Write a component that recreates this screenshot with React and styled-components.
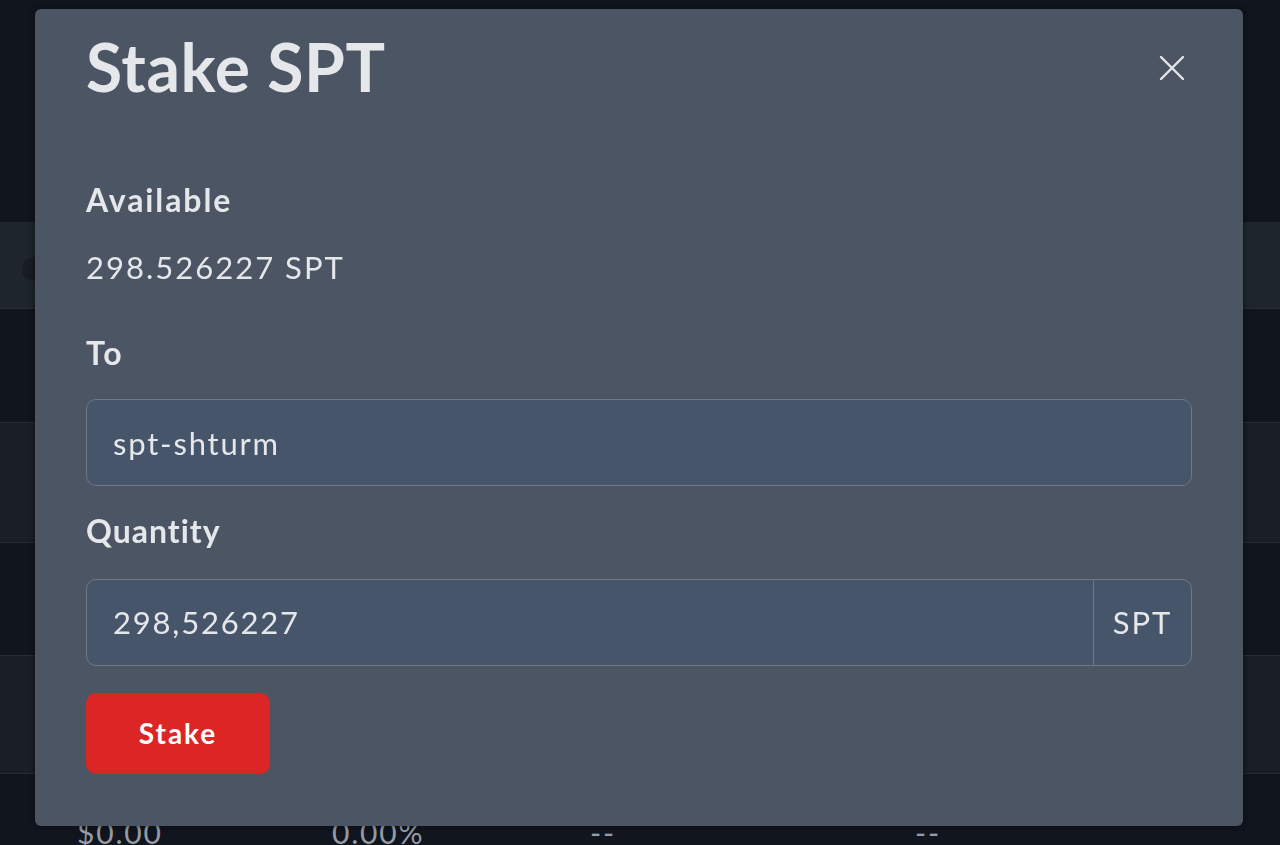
import React from 'react'
import styled, { createGlobalStyle } from 'styled-components'

const GlobalStyle = createGlobalStyle`
  html, body {
    margin: 0;
    padding: 0;
    background: #10151e;
    font-family: Lato, "Open Sans", "Noto Sans", sans-serif;
    font-variant-ligatures: none;
    overflow: hidden;
  }
`

const Page = styled.div`
  width: 1280px;
  height: 845px;
  overflow: hidden;
  display: flex;
  flex-direction: column;
  background: #10151e;
`

const TopArea = styled.div`
  height: 222px;
  flex-shrink: 0;
  background: #10151e;
`

const TableRow = styled.div`
  height: ${p => p.$h}px;
  flex-shrink: 0;
  background: ${p => p.$bg};
  border-top: 1px solid ${p => p.$line ? '#262c35' : 'transparent'};
  display: grid;
  grid-template-columns: 77px 255px 258px 325px 1fr;
  align-items: center;
  color: #959ca6;
  font-size: 30px;
  letter-spacing: 1.8px;
  box-sizing: border-box;
`

const Cell = styled.div`
  grid-column: ${p => p.$col};
  margin-bottom: 4px;
`

const TokenIcon = styled.div`
  width: 24px;
  height: 24px;
  border-radius: 50%;
  background: #181d24;
  margin-left: 22px;
  margin-top: 10px;
`

const Overlay = styled.div`
  position: fixed;
  inset: 0;
  display: flex;
  justify-content: flex-start;
  align-items: flex-start;
  padding: 9px 0 0 35px;
`

const Modal = styled.div`
  width: 1208px;
  height: 817px;
  box-sizing: border-box;
  background: #4b5563;
  border-radius: 6px;
  box-shadow: 0 0 6px rgba(0, 0, 0, 0.55);
  padding: 18px 51px 0 51px;
  display: flex;
  flex-direction: column;
  color: #e5e7eb;
`

const Header = styled.div`
  display: flex;
  justify-content: space-between;
  align-items: center;
`

const Title = styled.h2`
  margin: 0;
  font-size: 66px;
  line-height: 1.2;
  font-weight: 700;
  color: #e5e7eb;
  letter-spacing: 0.6px;
`

const Close = styled.button`
  width: 28px;
  height: 28px;
  padding: 0;
  border: none;
  background: none;
  margin-right: 6px;
  margin-top: 2px;
  display: flex;
  align-items: center;
  justify-content: center;
  cursor: pointer;
`

const Label = styled.div`
  font-size: 32px;
  line-height: 1.2;
  font-weight: 700;
  color: #e5e7eb;
  letter-spacing: ${p => p.$spacing ?? 1.9}px;
  margin-top: ${p => p.$top}px;
  margin-bottom: ${p => p.$bottom || 0}px;
`

const Value = styled.div`
  font-size: 31px;
  line-height: 1.2;
  margin-top: 29px;
  letter-spacing: 2px;
  color: #e5e7eb;
`

const InputGroup = styled.div`
  display: flex;
  height: 87px;
  box-sizing: border-box;
  border: 1.5px solid #6f7886;
  border-radius: 10px;
  background: #465569;
  overflow: hidden;
`

const TextInput = styled.input`
  flex: 1;
  min-width: 0;
  border: none;
  outline: none;
  background: transparent;
  padding: 0 0 0 26px;
  font-family: inherit;
  font-size: 31px;
  letter-spacing: 1.8px;
  color: #e5e7eb;
`

const Addon = styled.div`
  width: 97px;
  display: flex;
  align-items: center;
  justify-content: center;
  border-left: 1.5px solid #6f7886;
  font-size: 31px;
  letter-spacing: 2px;
  color: #e5e7eb;
`

const StakeButton = styled.button`
  margin-top: 27px;
  width: 184px;
  height: 81px;
  border: none;
  border-radius: 10px;
  background: #dc2626;
  color: #ffffff;
  font-family: inherit;
  font-size: 28px;
  font-weight: 700;
  letter-spacing: 2px;
  cursor: pointer;
`

const rows = [
  { h: 86, bg: '#1f252d', icon: true },
  { h: 114, bg: '#10151e', line: true },
  { h: 120, bg: '#191e27', line: true },
  { h: 113, bg: '#10151e', line: true },
  { h: 118, bg: '#191e27', line: true },
  { h: 120, bg: '#10151e', line: true, last: true },
]

export default function App() {
  return (
    <>
      <GlobalStyle />
      <Page>
        <TopArea />
        {rows.map((r, i) => (
          <TableRow key={i} $h={r.h} $bg={r.bg} $line={r.line}>
            {r.icon && <Cell $col="1"><TokenIcon /></Cell>}
            {r.last && (
              <>
                <Cell $col="2">$0.00</Cell>
                <Cell $col="3">0.00%</Cell>
                <Cell $col="4">--</Cell>
                <Cell $col="5">--</Cell>
              </>
            )}
          </TableRow>
        ))}
      </Page>
      <Overlay>
        <Modal>
          <Header>
            <Title>Stake SPT</Title>
            <Close aria-label="Close">
              <svg width="26" height="26" viewBox="0 0 26 26" fill="none">
                <path d="M2 2 L24 24 M24 2 L2 24" stroke="#e5e7eb" strokeWidth="2.4" strokeLinecap="round" />
              </svg>
            </Close>
          </Header>
          <Label $top={75}>Available</Label>
          <Value>298.526227 SPT</Value>
          <Label $top={48} $bottom={27}>To</Label>
          <InputGroup>
            <TextInput defaultValue="spt-shturm" />
          </InputGroup>
          <Label $top={26} $bottom={28} $spacing={1}>Quantity</Label>
          <InputGroup>
            <TextInput defaultValue="298,526227" />
            <Addon>SPT</Addon>
          </InputGroup>
          <div>
            <StakeButton>Stake</StakeButton>
          </div>
        </Modal>
      </Overlay>
    </>
  )
}
